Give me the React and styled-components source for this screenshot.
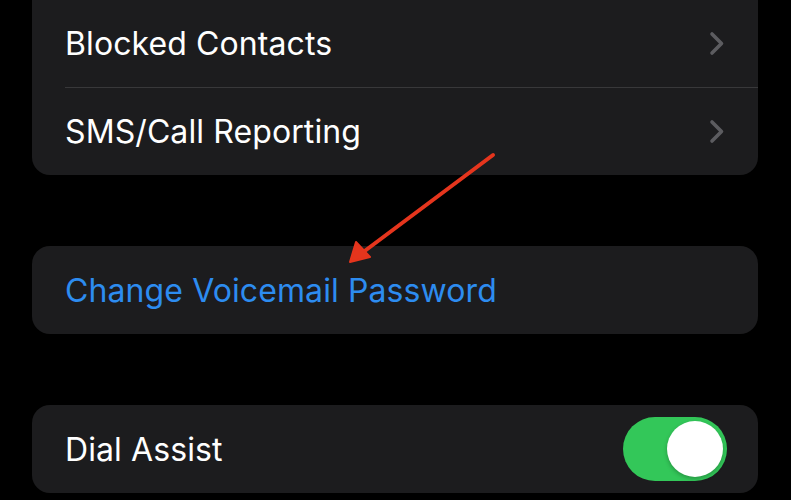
import styled, { createGlobalStyle } from 'styled-components'

const GlobalStyle = createGlobalStyle`
  html, body {
    margin: 0;
    padding: 0;
    background: #000;
  }
  body {
    font-family: Inter, "Liberation Sans", Arial, sans-serif;
    -webkit-font-smoothing: antialiased;
  }
`;

const Page = styled.div`
  position: relative;
  width: 791px;
  height: 500px;
  overflow: hidden;
  box-sizing: border-box;
  padding: 0 33px 0 32px;
  display: flex;
  flex-direction: column;
  gap: 71px;
  background: #000;
`;

const Card = styled.div`
  background: #1c1c1e;
  border-radius: ${({ $open }) => ($open ? '0 0 18px 18px' : '18px')};
  display: flex;
  flex-direction: column;
  overflow: hidden;
`;

const Row = styled.div`
  height: ${({ $h }) => $h || 88}px;
  display: flex;
  align-items: center;
  justify-content: space-between;
  padding: 0 32px 0 33px;
`;

const Divider = styled.div`
  height: 1px;
  margin-left: 33px;
  background: #38383a;
`;

const Label = styled.span`
  font-size: 32px;
  font-weight: 400;
  letter-spacing: 0.1px;
  color: ${({ $link }) => ($link ? '#2d8cf0' : '#ffffff')};
`;

const Chevron = styled.svg`
  width: 16px;
  height: 25px;
  margin-right: 1px;
`;

const Switch = styled.div`
  width: 104px;
  height: 64px;
  border-radius: 32px;
  background: #33c759;
  display: flex;
  align-items: center;
  justify-content: flex-end;
  padding: 0 4px;
  box-sizing: border-box;
  margin-right: -1px;
`;

const Knob = styled.div`
  width: 56px;
  height: 56px;
  border-radius: 50%;
  background: #ffffff;
  box-shadow: 0 2px 4px rgba(0, 0, 0, 0.25);
`;

const Arrow = styled.svg`
  position: absolute;
  left: 0;
  top: 0;
  width: 791px;
  height: 500px;
  pointer-events: none;
`;

function ChevronIcon() {
  return (
    <Chevron viewBox="0 0 16 25">
      <path d="M3 3 L12.5 12.5 L3 22" fill="none" stroke="#5c5c60" strokeWidth="3.6" strokeLinecap="round" strokeLinejoin="round" />
    </Chevron>
  )
}

export default function App() {
  return (
    <>
      <GlobalStyle />
      <Page>
        <Card $open>
          <Row $h={87}>
            <Label>Blocked Contacts</Label>
            <ChevronIcon />
          </Row>
          <Divider />
          <Row $h={87}>
            <Label>SMS/Call Reporting</Label>
            <ChevronIcon />
          </Row>
        </Card>

        <Card>
          <Row>
            <Label $link>Change Voicemail Password</Label>
          </Row>
        </Card>

        <Card>
          <Row>
            <Label>Dial Assist</Label>
            <Switch>
              <Knob />
            </Switch>
          </Row>
        </Card>

        <Arrow viewBox="0 0 791 500">
          <line x1="493" y1="155" x2="362" y2="253" stroke="#e5351d" strokeWidth="4" strokeLinecap="round" />
          <polygon points="350,262 356,242 370,257" fill="#e5351d" stroke="#e5351d" strokeWidth="2" strokeLinejoin="round" />
        </Arrow>
      </Page>
    </>
  )
}
